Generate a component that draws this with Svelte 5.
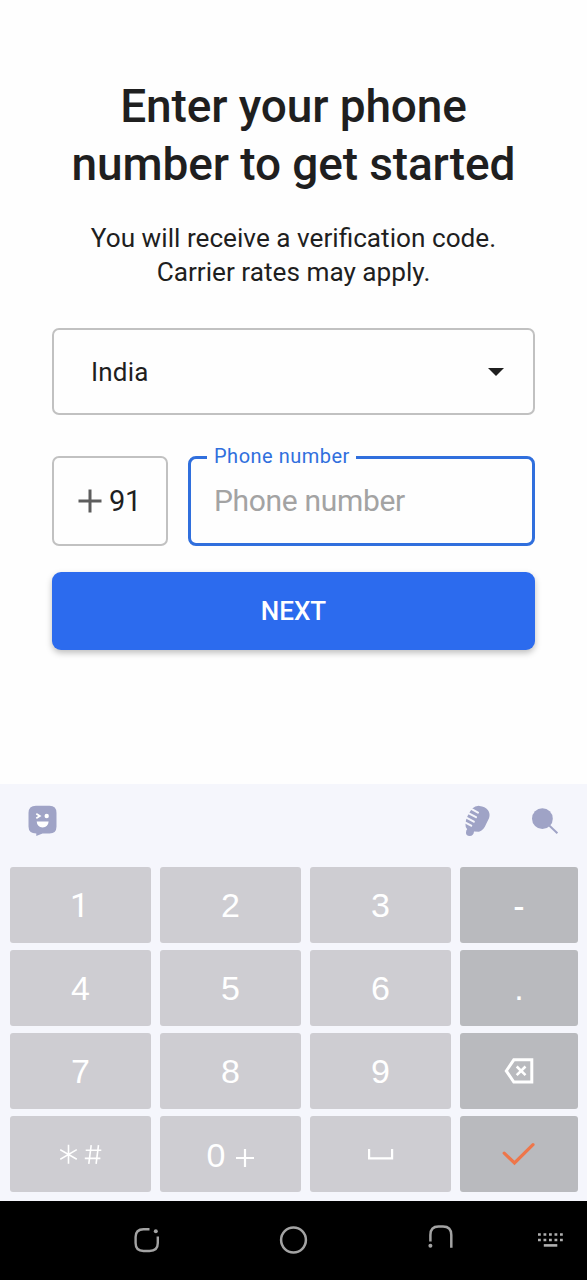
<script>
  const rows = [
    ['1', '2', '3', '-'],
    ['4', '5', '6', '.'],
    ['7', '8', '9', 'delete'],
    ['symbols', 'zero', 'space', 'done']
  ];
</script>

<div class="screen">
  <main>
    <h1>Enter your phone<br /><span>number to get started</span></h1>
    <p class="intro">You will receive a verification code.<br /><span>Carrier rates may apply.</span></p>

    <div class="country">
      <span>India</span>
      <svg width="16" height="8" viewBox="0 0 16 8"><path d="M0 0H16L8 8Z" fill="#1f1f1f" /></svg>
    </div>

    <div class="phone-row">
      <div class="code">
        <svg width="24" height="24" viewBox="0 0 24 24"><path d="M12 .5V23.5M.5 12H23.5" stroke="#5d5d5d" stroke-width="3" /></svg>
        <span>91</span>
      </div>
      <div class="phone">
        <span class="label">Phone number</span>
        <span class="placeholder">Phone number</span>
      </div>
    </div>

    <button class="next">NEXT</button>
  </main>

  <section class="keyboard">
    <div class="tools">
      <svg class="emoji" width="30" height="32" viewBox="0 0 30 32">
        <path d="M8 .8H21.5Q28.5 .8 28.5 8V21.5Q28.5 28.5 21.5 28.5H14.5L8.3 31V28.5Q.5 28.5 .5 21.5V8Q.5 .8 8 .8Z" fill="#9fa3c6" />
        <path d="M8.3 8.8L11.8 11L8.3 13.2" fill="none" stroke="#fff" stroke-width="1.8" />
        <circle cx="18.7" cy="11" r="2.2" fill="#fff" />
        <path d="M8.7 16.6H20.6Q20.2 22.4 14.6 22.4Q9.1 22.4 8.7 16.6Z" fill="#fff" />
      </svg>
      <svg class="mic" width="28" height="32" viewBox="0 0 28 32">
        <path d="M8.2 3.4Q11.5 .6 15.5 .9Q21 1.3 24 5.2Q26.5 8.5 25 13.2L22.4 18.5Q19.5 25.8 15 26.7L10 26.6Q9.6 31 5.7 31Q1.8 30.8 2 27.5Q2 25.4 3.2 24.3Q1.2 22.5 1.4 18.5Q2 11.4 8.2 3.4Z" fill="#9fa3c6" />
        <path d="M7.3 3.8L14 7.6M4.8 8.3L12 12.2M2.8 12.9L9.8 16.7M1 17.3L7.2 20.7" stroke="#f5f6fb" stroke-width="2" stroke-linecap="round" />
      </svg>
      <svg class="search" width="28" height="28" viewBox="0 0 28 28">
        <circle cx="11.4" cy="10.7" r="10.4" fill="#9fa3c6" />
        <path d="M18.5 17.8L26.4 25.2" stroke="#9fa3c6" stroke-width="2" />
      </svg>
    </div>

    <div class="keys">
      {#each rows as row}
        {#each row as key, column}
          <div class="key" class:dark={column === 3} class:dash={key === '-'} class:one={key === '1'}>
            {#if key === 'delete'}
              <svg class="delete" width="30" height="26" viewBox="0 0 30 26">
                <path d="M9.8 1.8H27.8V24H9.8L2.3 12.9Z" fill="none" stroke="#fff" stroke-width="3" />
                <path d="M12.7 8.5L21.5 17.2M21.5 8.5L12.7 17.2" stroke="#fff" stroke-width="2.6" />
              </svg>
            {:else if key === 'symbols'}
              <svg class="symbols" width="42" height="22" viewBox="0 0 42 22">
                <path d="M8.5 .8V19.8M.2 5.6L16.8 15.2M.2 15.2L16.8 5.6M31.2 1.2L28.8 19.8M38.5 1.2L36.1 19.8M25.7 6.2H41.3M24.8 14.4H40.4" fill="none" stroke="#fff" stroke-width="1.6" />
              </svg>
            {:else if key === 'zero'}
              <span class="zero">0</span>
              <svg class="plus" width="18" height="18" viewBox="0 0 18 18"><path d="M9 0V18M0 9H18" stroke="#fff" stroke-width="2.2" /></svg>
            {:else if key === 'space'}
              <svg class="space" width="26" height="11" viewBox="0 0 26 11"><path d="M1.1 0V9.4H24.1V0" fill="none" stroke="#fff" stroke-width="2.2" /></svg>
            {:else if key === 'done'}
              <svg class="check" width="34" height="24" viewBox="0 0 34 24"><path d="M2.2 11.2L12.5 21L31 2.7" fill="none" stroke="#ee764a" stroke-width="3.2" stroke-linecap="round" /></svg>
            {:else}
              <span>{key}</span>
            {/if}
          </div>
        {/each}
      {/each}
    </div>
  </section>

  <nav>
    <svg class="recent" width="40" height="40" viewBox="0 0 40 40">
      <path d="M22.5 9.2H16.5Q8.6 9.2 8.6 17V23Q8.6 31 16.5 31H22.5Q30.8 31 30.8 23V16.5" fill="none" stroke="#a3a3a3" stroke-width="2.4" />
      <circle cx="28.8" cy="11.3" r="2" fill="#a3a3a3" />
    </svg>
    <svg class="home" width="40" height="40" viewBox="0 0 40 40">
      <circle cx="20.5" cy="19" r="12.4" fill="none" stroke="#a3a3a3" stroke-width="2.5" />
    </svg>
    <svg class="back" width="40" height="40" viewBox="0 0 40 40">
      <path d="M10.4 20.5V14Q10.4 5.5 18.5 5.5H23Q31.3 5.5 31.3 14V26.7" fill="none" stroke="#a3a3a3" stroke-width="2.5" />
      <circle cx="10.4" cy="24.7" r="2" fill="#a3a3a3" />
    </svg>
    <svg class="keypad" width="40" height="40" viewBox="0 0 40 40">
      <path d="M8 13.5H33.5M8 19H33.5" stroke="#b0b0b0" stroke-width="2.7" stroke-dasharray="2.8 2.7" />
      <path d="M13.8 24.4H27.3" stroke="#b0b0b0" stroke-width="2.6" />
    </svg>
  </nav>
</div>

<style>
  :global(body) { margin: 0; background: #fff; }
  .screen {
    width: 587px;
    height: 1280px;
    display: flex;
    flex-direction: column;
    overflow: hidden;
    background: #fefefe;
    color: #1f1f1f;
    font-family: Roboto, sans-serif;
  }
  svg { display: block; flex: none; }
  main { height: 784px; box-sizing: border-box; padding: 77px 52px 0; }
  h1 {
    margin: 0;
    text-align: center;
    font-size: 46px;
    line-height: 58px;
    font-weight: 500;
    letter-spacing: -0.12px;
    white-space: nowrap;
  }
  .intro {
    margin: 28px 0 0;
    text-align: center;
    font-size: 26.2px;
    line-height: 34px;
    white-space: nowrap;
  }
  .country {
    box-sizing: border-box;
    height: 87px;
    margin-top: 39px;
    padding: 1px 29px 0 37px;
    display: flex;
    align-items: center;
    justify-content: space-between;
    border: 2px solid #c1c1c1;
    border-radius: 7px;
    font-size: 26px;
    letter-spacing: 0.2px;
  }
  .country svg { margin-top: -1px; }
  .phone-row { display: flex; gap: 20px; margin-top: 41px; }
  .code {
    box-sizing: border-box;
    width: 116px;
    height: 90px;
    display: flex;
    align-items: center;
    gap: 7px;
    padding-left: 24px;
    border: 2px solid #c1c1c1;
    border-radius: 7px;
    font-size: 29px;
    letter-spacing: -0.3px;
  }
  .phone {
    position: relative;
    box-sizing: border-box;
    flex: 1;
    height: 90px;
    display: flex;
    align-items: center;
    padding-left: 23px;
    border: 3px solid #306fdd;
    border-radius: 8px;
  }
  .label {
    position: absolute;
    left: 16px;
    top: -15px;
    padding: 0 6px 0 7px;
    background: #fefefe;
    color: #306fdd;
    font-size: 20px;
    line-height: 24px;
    letter-spacing: 0.5px;
    white-space: nowrap;
  }
  .placeholder { margin-top: -1px; color: #a3a3a3; font-size: 30px; letter-spacing: -0.33px; }
  .next {
    display: block;
    width: 100%;
    height: 78px;
    margin-top: 26px;
    padding: 0;
    border: 0;
    border-radius: 9px;
    background: #2c6bee;
    box-shadow: 0 3px 6px rgba(0, 0, 0, 0.25);
    color: #fff;
    font: 500 26px/30px Roboto, sans-serif;
  }
  .keyboard { height: 417px; background: #f5f6fc; }
  .tools { display: flex; height: 83px; align-items: flex-start; box-sizing: border-box; padding-top: 21px; }
  .emoji { margin-left: 28px; }
  .mic { margin-left: 406px; }
  .search { margin: 3px 0 0 39px; }
  .keys {
    display: grid;
    grid-template-columns: 141px 141px 141px 118px;
    grid-auto-rows: 75.7px;
    gap: 7.4px 9px;
    padding-left: 10px;
  }
  .key {
    display: flex;
    align-items: center;
    justify-content: center;
    border-radius: 3px;
    background: #cecdd2;
    color: #fff;
    font: 34px/40px "Liberation Sans", Arial, sans-serif;
    box-sizing: border-box;
  }
  .one { font-family: Roboto, sans-serif; padding-right: 2px; }
  .dash span { transform: scaleY(1.15); }
  .dark { background: #b9babe; }
  .delete { margin: -1px 1px 0 0; }
  .symbols { margin-top: 2px; }
  .zero { margin: 1px 11px 0 0; }
  .plus { margin-top: 7px; }
  .space { margin-top: 1px; }
  .check { margin-top: -1px; }
  nav { height: 79px; display: flex; align-items: flex-start; background: #000; padding-top: 20px; box-sizing: border-box; }
  .recent { margin-left: 127px; margin-top: -1px; }
  .home { margin-left: 106px; }
  .back { margin-left: 107px; }
  .keypad { margin-left: 70px; }
</style>
